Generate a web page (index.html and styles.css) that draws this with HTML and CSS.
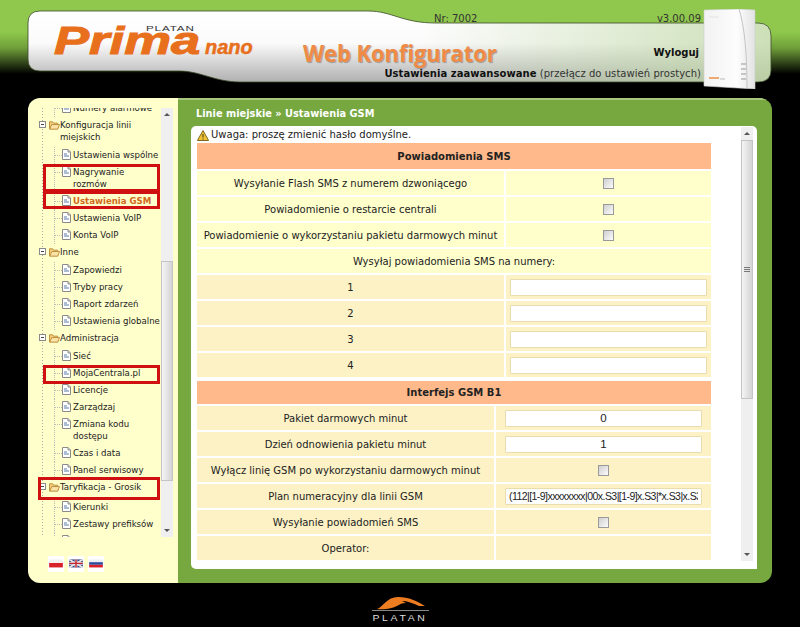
FILE: index.html
```html
<!DOCTYPE html>
<html lang="pl">
<head>
<meta charset="utf-8">
<title>Prima nano Web Konfigurator</title>
<link rel="stylesheet" href="styles.css">
</head>
<body>
<svg class="defs" width="0" height="0">
  <symbol id="doc" viewBox="0 0 9 11"><path d="M.5.5H6L8.5 3V10.5H.5Z" fill="#fff" stroke="#8a8a8a"/><path d="M6 .5V3H8.5" fill="#ddd" stroke="#8a8a8a"/><path d="M2 5H5M2 7H7" stroke="#5a7aa8"/></symbol>
  <symbol id="folder" viewBox="0 0 12 10"><path d="M.5 9V1.5H4L5 3H9.5V9Z" fill="#f4cf82" stroke="#b98a35"/><path d="M.7 9.5L3 4.5H11.5L9.5 9.5Z" fill="#fbe3a8" stroke="#b98a35"/></symbol>
  <symbol id="minus" viewBox="0 0 7 7"><rect x=".5" y=".5" width="6" height="6" fill="#fff" stroke="#8a8a8a"/><path d="M2 3.5H5" stroke="#444"/></symbol>
</svg>
<header class="hdr">
  <svg class="hdr-bg" viewBox="0 0 800 98" width="800" height="98" aria-hidden="true">
    <defs>
      <linearGradient id="hv" x1="0" y1="11" x2="0" y2="82" gradientUnits="userSpaceOnUse"><stop offset="0" stop-color="#fff"/><stop offset=".45" stop-color="#fbfbfb"/><stop offset=".85" stop-color="#c4c4c4"/><stop offset="1" stop-color="#b0b0b0"/></linearGradient>
      <linearGradient id="hh" x1="420" y1="0" x2="771" y2="0" gradientUnits="userSpaceOnUse"><stop offset="0" stop-color="#bcd6a0" stop-opacity="0"/><stop offset="1" stop-color="#bcd6a0" stop-opacity=".75"/></linearGradient>
    </defs>
    <path d="M40 11H368C392 11 402 23 436 23H758Q771 23 771 36V70Q771 82 758 82H240C215 82 200 71 180 71H40Q28 71 28 59V23Q28 11 40 11Z" fill="url(#hv)"/>
    <path d="M40 11H368C392 11 402 23 436 23H758Q771 23 771 36V70Q771 82 758 82H240C215 82 200 71 180 71H40Q28 71 28 59V23Q28 11 40 11Z" fill="url(#hh)" stroke="#3b4a2a" stroke-width=".8"/>
  </svg>
  <div class="brand">
    <span class="brand-platan">PLATAN</span>
    <span class="brand-prima">Prima</span><span class="brand-nano">nano</span>
  </div>
  <div class="hdr-main">
    <div class="meta"><span>Nr: 7002</span><span>v3.00.09</span></div>
    <div class="title-row"><span class="app-title">Web Konfigurator</span><a class="logout">Wyloguj</a></div>
    <div class="mode"><b>Ustawienia zaawansowane</b> (przełącz do ustawień prostych)</div>
  </div>
  <svg class="device" viewBox="0 0 54 80" width="54" height="80" aria-hidden="true">
    <defs><linearGradient id="dv" x1="0" y1="0" x2="1" y2="0"><stop offset="0" stop-color="#f2f2f2"/><stop offset=".65" stop-color="#fdfdfd"/><stop offset="1" stop-color="#e2e2e2"/></linearGradient></defs>
    <path d="M1 1L36 0L52 1V80L1 77Z" fill="url(#dv)" stroke="#cfcfcf" stroke-width=".6"/>
    <path d="M36 0Q44 25 44 79" fill="none" stroke="#c4c4c4"/>
    <path d="M38 55H43M38 60H43M38 65H43M38 70H43" stroke="#999"/>
    <path d="M6 69H16" stroke="#ec8a3c" stroke-width="1.4"/>
    <path d="M17 70H22" stroke="#bbb"/>
    <path d="M6 8H16" stroke="#e2e2e2"/>
  </svg>
</header>
<main class="panel">
  <aside class="side">
    <div class="tree-wrap">
      <div class="tree">
        <div class="leaf"><svg class="i-doc"><use href="#doc"/></svg><span>Numery alarmowe</span></div>
        <div class="node"><svg class="i-min"><use href="#minus"/></svg><svg class="i-fold"><use href="#folder"/></svg><span class="node-l">Konfiguracja linii miejskich</span></div>
        <div class="leaf"><svg class="i-doc"><use href="#doc"/></svg><span>Ustawienia wspólne</span></div>
        <div class="leaf"><svg class="i-doc"><use href="#doc"/></svg><span class="wrap">Nagrywanie rozmów</span></div>
        <div class="leaf"><svg class="i-doc"><use href="#doc"/></svg><span class="active">Ustawienia GSM</span></div>
        <div class="leaf"><svg class="i-doc"><use href="#doc"/></svg><span>Ustawienia VoIP</span></div>
        <div class="leaf"><svg class="i-doc"><use href="#doc"/></svg><span>Konta VoIP</span></div>
        <div class="node"><svg class="i-min"><use href="#minus"/></svg><svg class="i-fold"><use href="#folder"/></svg><span>Inne</span></div>
        <div class="leaf"><svg class="i-doc"><use href="#doc"/></svg><span>Zapowiedzi</span></div>
        <div class="leaf"><svg class="i-doc"><use href="#doc"/></svg><span>Tryby pracy</span></div>
        <div class="leaf"><svg class="i-doc"><use href="#doc"/></svg><span>Raport zdarzeń</span></div>
        <div class="leaf"><svg class="i-doc"><use href="#doc"/></svg><span>Ustawienia globalne</span></div>
        <div class="node"><svg class="i-min"><use href="#minus"/></svg><svg class="i-fold"><use href="#folder"/></svg><span>Administracja</span></div>
        <div class="leaf"><svg class="i-doc"><use href="#doc"/></svg><span>Sieć</span></div>
        <div class="leaf"><svg class="i-doc"><use href="#doc"/></svg><span>MojaCentrala.pl</span></div>
        <div class="leaf"><svg class="i-doc"><use href="#doc"/></svg><span>Licencje</span></div>
        <div class="leaf"><svg class="i-doc"><use href="#doc"/></svg><span>Zarządzaj</span></div>
        <div class="leaf"><svg class="i-doc"><use href="#doc"/></svg><span class="wrap">Zmiana kodu dostępu</span></div>
        <div class="leaf"><svg class="i-doc"><use href="#doc"/></svg><span>Czas i data</span></div>
        <div class="leaf"><svg class="i-doc"><use href="#doc"/></svg><span>Panel serwisowy</span></div>
        <div class="node node-tall"><svg class="i-min"><use href="#minus"/></svg><svg class="i-fold"><use href="#folder"/></svg><span>Taryfikacja - Grosik</span></div>
        <div class="leaf"><svg class="i-doc"><use href="#doc"/></svg><span>Kierunki</span></div>
        <div class="leaf"><svg class="i-doc"><use href="#doc"/></svg><span>Zestawy prefiksów</span></div>
        <div class="leaf"><svg class="i-doc"><use href="#doc"/></svg><span>Profile</span></div>
      </div>
      <div class="sb sb-side"><div class="sb-up"></div><div class="sb-track"><div class="sb-thumb"></div></div><div class="sb-down"></div></div>
    </div>
    <div class="flags">
      <svg class="flag" viewBox="0 0 14 14"><rect width="14" height="14" fill="#fff"/><rect x="1" y="6" width="12" height="4" fill="#d8222a"/><rect x="1" y="3" width="12" height="3" fill="#f4f0f0"/></svg>
      <svg class="flag" viewBox="0 0 14 14"><rect width="14" height="14" fill="#fff"/><rect x="1" y="3" width="12" height="7" fill="#2b3f80"/><path d="M1 3L13 10M13 3L1 10" stroke="#e6e6e6" stroke-width="1.6"/><path d="M7 3V10M1 6.5H13" stroke="#e6e6e6" stroke-width="2.4"/><path d="M7 3V10M1 6.5H13" stroke="#c8202c" stroke-width="1.2"/></svg>
      <svg class="flag" viewBox="0 0 14 14"><rect width="14" height="14" fill="#fff"/><rect x="1" y="3" width="12" height="2.4" fill="#eef0f6"/><rect x="1" y="5.4" width="12" height="2.3" fill="#2f4fa0"/><rect x="1" y="7.7" width="12" height="2.3" fill="#d8222a"/></svg>
    </div>
    <i class="mark m1"></i><i class="mark m2"></i><i class="mark m3"></i><i class="mark m4"></i>
  </aside>
  <section class="content">
    <h1 class="crumb">Linie miejskie » Ustawienia GSM</h1>
    <div class="card">
      <div class="card-main">
        <p class="warn"><svg class="warn-i" viewBox="0 0 12 11"><path d="M6 .5L11.6 10.5H.4Z" fill="#f2c230" stroke="#7d6a20"/><path d="M6 4V7.5M6 8.5V9.5" stroke="#333"/></svg>Uwaga: proszę zmienić hasło domyślne.</p>
        <table class="tbl t1">
          <colgroup><col class="c1a"><col></colgroup>
          <tr class="head"><th colspan="2">Powiadomienia SMS</th></tr>
          <tr><td>Wysyłanie Flash SMS z numerem dzwoniącego</td><td class="c"><input type="checkbox" class="chk"></td></tr>
          <tr><td>Powiadomienie o restarcie centrali</td><td class="c"><input type="checkbox" class="chk"></td></tr>
          <tr><td>Powiadomienie o wykorzystaniu pakietu darmowych minut</td><td class="c"><input type="checkbox" class="chk"></td></tr>
          <tr><td colspan="2">Wysyłaj powiadomienia SMS na numery:</td></tr>
          <tr class="alt"><td>1</td><td class="c"><input type="text" class="inp"></td></tr>
          <tr class="alt"><td>2</td><td class="c"><input type="text" class="inp"></td></tr>
          <tr class="alt"><td>3</td><td class="c"><input type="text" class="inp"></td></tr>
          <tr class="alt"><td>4</td><td class="c"><input type="text" class="inp"></td></tr>
        </table>
        <table class="tbl t2">
          <colgroup><col class="c2a"><col></colgroup>
          <tr class="head"><th colspan="2">Interfejs GSM B1</th></tr>
          <tr class="alt"><td>Pakiet darmowych minut</td><td class="c"><input type="text" class="inp mid" value="0"></td></tr>
          <tr class="alt"><td>Dzień odnowienia pakietu minut</td><td class="c"><input type="text" class="inp mid" value="1"></td></tr>
          <tr class="alt"><td>Wyłącz linię GSM po wykorzystaniu darmowych minut</td><td class="c"><input type="checkbox" class="chk"></td></tr>
          <tr class="alt"><td>Plan numeracyjny dla linii GSM</td><td class="c"><input type="text" class="inp plan" value="(112|[1-9]xxxxxxxx|00x.S3|[1-9]x.S3|*x.S3|x.S3)"></td></tr>
          <tr class="alt"><td>Wysyłanie powiadomień SMS</td><td class="c"><input type="checkbox" class="chk"></td></tr>
          <tr class="alt"><td>Operator:</td><td class="c"></td></tr>
        </table>
      </div>
      <div class="sb sb-main"><div class="sb-up"></div><div class="sb-track"><div class="sb-thumb"><span class="grip"></span></div></div><div class="sb-down"></div></div>
    </div>
  </section>
</main>
<footer class="foot">
  <svg class="foot-swoosh" viewBox="0 0 54 14" width="54" height="14" aria-hidden="true"><path d="M4 13C10 11 14 1 25 1C36 1 44 5 52 10L46 10C40 7 34 5 29 5L33 7C29 7 27 8 24 10C20 12 12 14 4 13Z" fill="#ee7d22"/></svg>
  <div class="foot-rule"></div>
  <div class="foot-name">PLATAN</div>
</footer>
</body>
</html>
```
FILE: styles.css
```css
*{box-sizing:border-box}
html,body{margin:0;height:100%}
body{width:800px;height:627px;overflow:hidden;background:#000 linear-gradient(#8fc84c 0,#8fc84c 32px,#6f9e3a 48px,#000 74px) no-repeat;background-size:100% 74px;font-family:"DejaVu Sans",sans-serif;font-size:10px;color:#222;display:flex;flex-direction:column}
.defs{position:absolute}

.hdr{position:relative;height:98px;flex:none;display:flex;padding-left:54px}
.hdr-bg{position:absolute;left:0;top:0}
.brand{position:relative;width:249px;padding-top:27px;height:60px;white-space:nowrap}
.brand-prima{display:inline-block;width:151px;font:italic bold 39px/28px "Liberation Sans",sans-serif;color:#e8701c;transform:scaleX(1.35);transform-origin:left;-webkit-text-stroke:1px #e8701c}
.brand-nano{font:italic bold 20px/20px "Liberation Sans",sans-serif;color:#e8701c;-webkit-text-stroke:.5px #e8701c}
.brand-platan{position:absolute;left:92px;top:25px;font:8px/8px "Liberation Sans",sans-serif;letter-spacing:.6px;transform:scaleX(1.45);transform-origin:left;color:#333}
.hdr-main{position:relative;flex:1;display:flex;flex-direction:column;padding:12px 99px 0 0}
.meta{display:flex;justify-content:space-between;padding-left:131px;height:14px;line-height:14px;color:#333}
.title-row{display:flex;justify-content:space-between;align-items:center;height:36px;margin-top:9px}
.app-title{display:inline-block;font:bold 24px/36px "Open Sans",sans-serif;color:#f08b45;text-shadow:1px 1px 1px #999;transform:scaleX(.91);transform-origin:left}
.logout{font-weight:bold;margin-right:2px;margin-top:-2px;color:#111}
.mode{text-align:right;line-height:12px;margin-top:-3px;color:#333;letter-spacing:.005em}
.mode b{color:#111}
.device{position:absolute;left:703px;top:9px}

.panel{flex:none;width:744px;height:485px;margin-left:28px;display:flex;border-radius:12px;overflow:hidden;position:relative}
.side{position:relative;width:150px;flex:none;background:#ffffcc;padding:10px 5px 0 8px}
.tree-wrap{display:flex;height:429px;gap:0}
.tree{flex:1;overflow:hidden;font-size:8.6px;line-height:12px;color:#222;background:repeating-linear-gradient(#aaa 0 1px,transparent 1px 3px) 6px 0/1px 100% no-repeat}
.leaf{display:flex;align-items:flex-start;padding:2px 0 3px 26px;position:relative}
.leaf:first-child{margin-top:-8px}
.leaf::before{content:"";position:absolute;left:18px;top:8px;width:8px;border-top:1px dotted #bbb}
.leaf::after{content:"";position:absolute;left:18px;top:0;bottom:0;border-left:1px dotted #bbb}
.i-doc{width:9px;height:11px;margin-right:2px;flex:none}
.node{display:flex;align-items:flex-start;padding:2px 0 4px}
.node-tall{padding:2px 0 6px}
.i-min{width:7px;height:7px;margin:2px 3px 0 3px;flex:none}
.i-fold{width:11px;height:10px;margin-top:1px;flex:none}
.node-l{width:84px}
.wrap{width:60px}
.active{color:#d0691c;font-weight:bold}
.flags{display:flex;gap:4px;padding:19px 0 0 12px}
.flag{width:16px;height:16px}
.mark{position:absolute;border:3px solid #d01010;pointer-events:none}
.m1{left:15px;top:66px;width:117px;height:28px}
.m2{left:15px;top:93px;width:117px;height:18px}
.m3{left:15px;top:267px;width:117px;height:19px}
.m4{left:10px;top:379px;width:122px;height:23px}

.sb{width:12px;flex:none;display:flex;flex-direction:column;background:#efefef}
.sb-up,.sb-down{height:13px;flex:none;position:relative}
.sb-up::after,.sb-down::after{content:"";position:absolute;left:3px;top:5px;border:3px solid transparent;border-top:0;border-bottom:3px solid #555}
.sb-down::after{border-bottom:0;border-top:3px solid #555}
.sb-track{flex:1}
.sb-thumb{background:linear-gradient(90deg,#f4f4f4,#d4d4d4);border:1px solid #c4c4c4;display:flex;align-items:center;justify-content:center}
.sb-side .sb-thumb{height:220px;margin-top:140px}
.sb-main .sb-thumb{height:259px}
.grip{width:6px;height:5px;border-top:1px solid #777;border-bottom:1px solid #777;background:linear-gradient(#777,#777) 0 1px/100% 1px no-repeat}

.content{flex:1;min-width:0;background:#76a83f;display:flex;flex-direction:column;padding:0 15px 14px 13px;box-shadow:inset 0 2px 0 #a6c77d}
.crumb{margin:0;height:28px;padding:10px 0 0 5px;font-size:9.8px;line-height:12px;font-weight:bold;color:#fff}
.card{flex:1;min-height:0;background:#fff;border-radius:5px 5px 0 5px;display:flex;padding:1px 4px 8px 6px;overflow:hidden}
.card-main{width:514px;flex:none;margin-right:30px;display:flex;flex-direction:column}
.warn{margin:0;height:16px;line-height:14px;display:flex;align-items:center;color:#222;flex:none}
.warn-i{width:12px;height:11px;margin-right:2px;flex:none}
.tbl{width:514px;border-collapse:collapse;table-layout:fixed;flex:none}
.c1a{width:308px}
.c2a{width:298px}
.tbl td,.tbl th{height:26px;padding:0;text-align:center;border-bottom:2px solid #fff;font-size:10px;font-weight:normal;background:#ffffcc}
.tbl td:first-child:not(:only-child){border-right:2px solid #fff}
.tbl .alt td{background:#fcf2c6}
.tbl .head th{background:#ffb98a;font-weight:bold;color:#222;height:27px}
.t2 .head th{height:24px}
.t2{margin-top:2px}
.c{line-height:0}
.chk{appearance:none;width:11px;height:11px;margin:0;border:1px solid #9a9a9a;background:linear-gradient(135deg,#cfcfcf,#fbfbfb);vertical-align:middle}
.inp{width:197px;height:17px;border:1px solid #e9dcae;border-radius:1px;background:#fff;padding:0 3px;font:11.5px "Liberation Sans",sans-serif;color:#222;vertical-align:middle}
.mid{text-align:center}
.plan{font-size:10.5px;letter-spacing:-.55px}

.foot{flex:none;display:flex;flex-direction:column;align-items:center;padding-top:13px;width:800px}
.foot-rule{width:57px;height:1px;background:#888}
.foot-name{font:9.5px/10px "Liberation Sans",sans-serif;color:#ddd;letter-spacing:2.4px;transform:scaleX(1.1);margin-top:2px}
```
